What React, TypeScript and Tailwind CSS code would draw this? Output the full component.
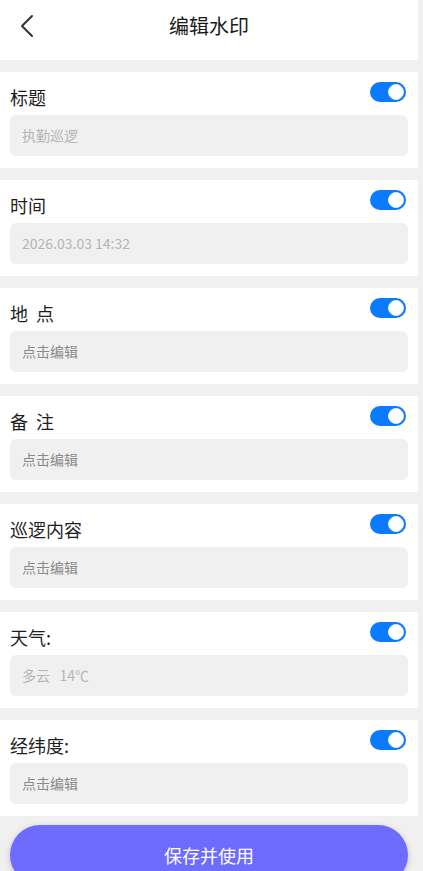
import { useState } from 'react';

const fields = [
    { label: '标题', value: '执勤巡逻', filled: true },
    { label: '时间', value: '2026.03.03 14:32', filled: true },
    { label: '地\u00a0\u00a0点', value: '点击编辑', filled: false },
    { label: '备\u00a0\u00a0注', value: '点击编辑', filled: false },
    { label: '巡逻内容', value: '点击编辑', filled: false },
    { label: '天气:', value: '多云\u00a0\u00a0\u00a014℃', filled: true },
    { label: '经纬度:', value: '点击编辑', filled: false },
];

function Toggle({ on, onClick }: { on: boolean; onClick: () => void }) {
    return (
        <button
            onClick={onClick}
            className={`w-[36px] h-[20px] rounded-full flex items-center px-[2px] ${on ? 'bg-[#0a7aff] justify-end' : 'bg-[#d0d0d0] justify-start'}`}
        >
            <span className="w-[16px] h-[16px] rounded-full bg-white border border-[#e6efff]"></span>
        </button>
    );
}

export default function App() {
    const [enabled, setEnabled] = useState(fields.map(() => true));

    return (
        <div
            className="min-h-[871px] bg-[#f0f0f0] pr-[5px] flex flex-col"
            style={{ fontFamily: '"Noto Sans CJK SC", "Noto Sans", sans-serif' }}
        >
            <div className="bg-white h-[60px] flex items-center relative">
                <svg className="absolute left-[18px] top-[14px]" width="18" height="24" viewBox="0 0 18 24" fill="none">
                    <path d="M14 2 L4 12 L14 22" stroke="#333" strokeWidth="2" strokeLinecap="round" strokeLinejoin="round" />
                </svg>
                <div className="flex-1 text-center text-[20px] text-[#1a1a1a] -mt-[9px]">编辑水印</div>
            </div>

            <div className="flex flex-col gap-[12px] mt-[12px]">
                {fields.map((f, idx) => (
                    <div key={idx} className="bg-white h-[96px] px-[10px] pt-[10px]">
                        <div className="flex justify-between items-start h-[33px]">
                            <div className="text-[18px] text-[#1e1e1e] mt-[1px] leading-[28px]">{f.label}</div>
                            <div className="mr-[2px]">
                                <Toggle
                                    on={enabled[idx]}
                                    onClick={() => setEnabled(enabled.map((v, i) => (i === idx ? !v : v)))}
                                />
                            </div>
                        </div>
                        <div className="bg-[#f0f0f0] rounded-[6px] h-[41px] flex items-center px-[12px]">
                            <span className={`text-[14px] ${f.filled ? 'text-[#b5b5b5]' : 'text-[#8a8a8a]'}`}>{f.value}</span>
                        </div>
                    </div>
                ))}
            </div>

            <div className="px-[10px] mt-[9px]">
                <button className="w-full h-[60px] rounded-full bg-[#6e6bff] text-white text-[18px] shadow-[0_2px_6px_rgba(0,0,0,0.2)]">
                    保存并使用
                </button>
            </div>
        </div>
    );
}
